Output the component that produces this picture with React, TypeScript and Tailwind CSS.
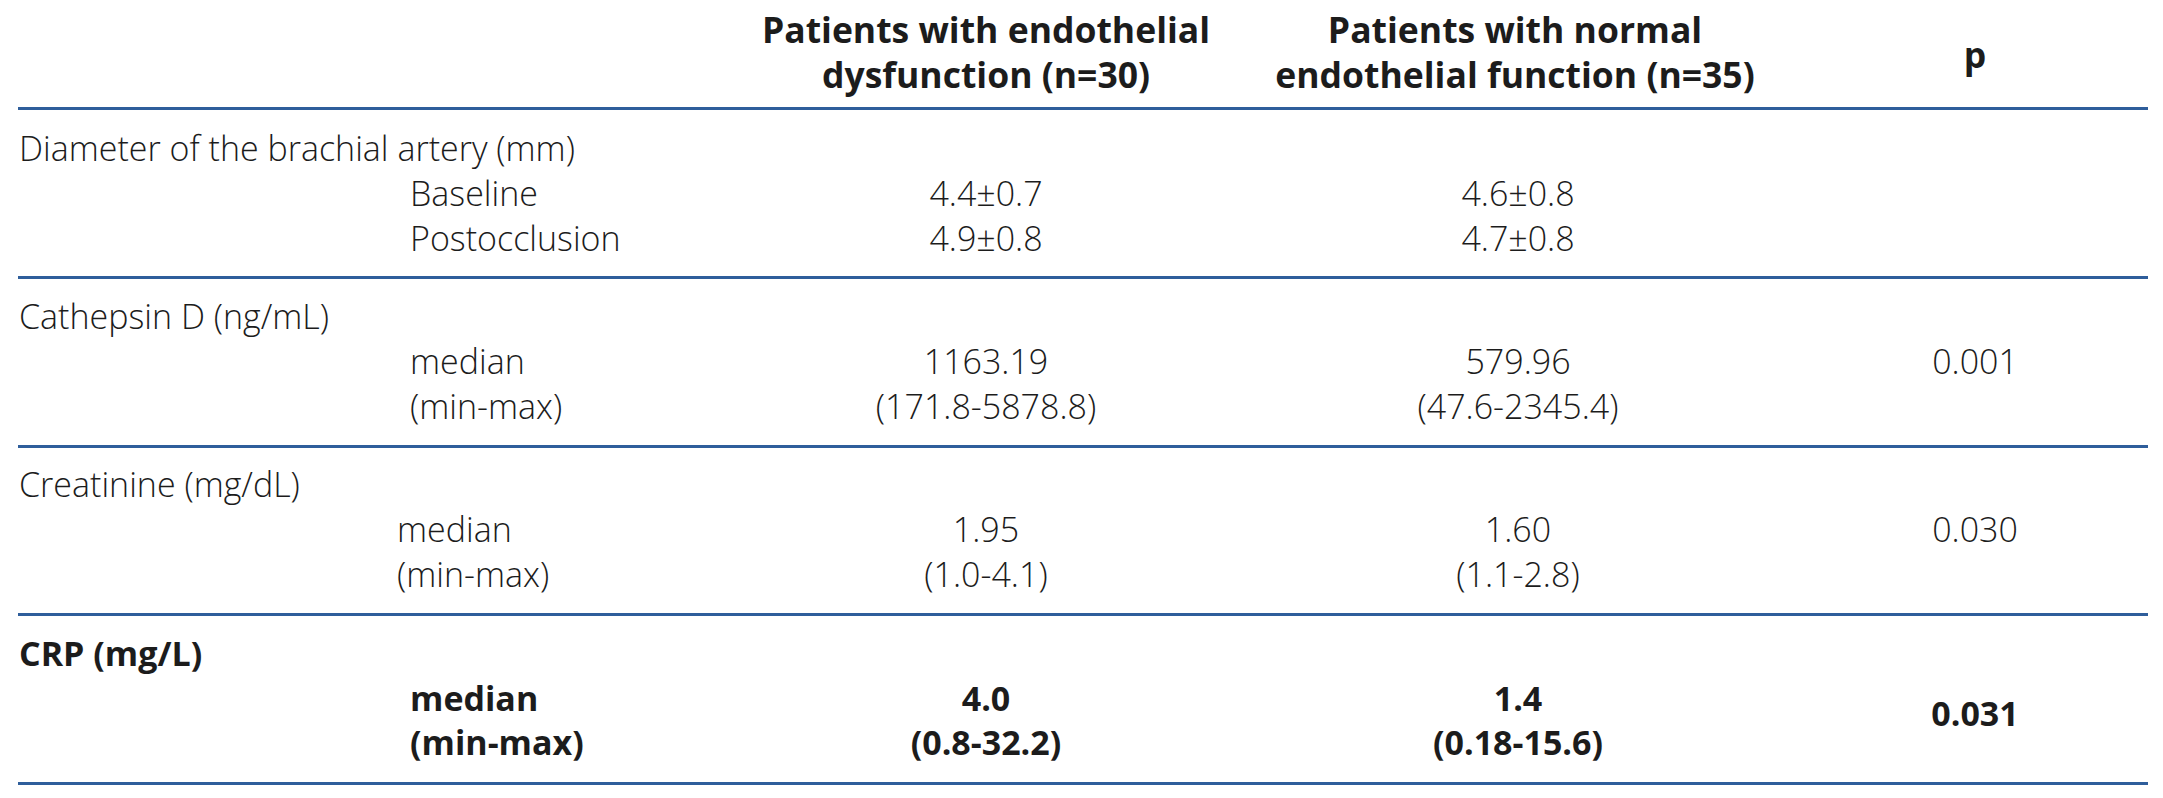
import React from "react";

const COLS = "grid grid-cols-[722px_492px_572px_342px]";

type Row = {
  title: string;
  indent: string;
  labels: string[];
  a: string[];
  b: string[];
  p?: string;
  bold?: boolean;
  pad: string;
};

const ROWS: Row[] = [
  {
    title: "Diameter of the brachial artery (mm)",
    indent: "pl-[392px]",
    labels: ["Baseline", "Postocclusion"],
    a: ["4.4±0.7", "4.9±0.8"],
    b: ["4.6±0.8", "4.7±0.8"],
    pad: "pt-[16px] pb-[15px]",
  },
  {
    title: "Cathepsin D (ng/mL)",
    indent: "pl-[392px]",
    labels: ["median", "(min-max)"],
    a: ["1163.19", "(171.8-5878.8)"],
    b: ["579.96", "(47.6-2345.4)"],
    p: "0.001",
    pad: "pt-[15px] pb-[16px]",
  },
  {
    title: "Creatinine (mg/dL)",
    indent: "pl-[379px]",
    labels: ["median", "(min-max)"],
    a: ["1.95", "(1.0-4.1)"],
    b: ["1.60", "(1.1-2.8)"],
    p: "0.030",
    pad: "pt-[14px] pb-[16px]",
  },
  {
    title: "CRP (mg/L)",
    indent: "pl-[392px]",
    labels: ["median", "(min-max)"],
    a: ["4.0", "(0.8-32.2)"],
    b: ["1.4", "(0.18-15.6)"],
    p: "0.031",
    bold: true,
    pad: "pt-[15px] pb-[18px]",
  },
];

function Lines({ items, lead }: { items: string[]; lead: string }) {
  return (
    <div className={lead}>
      {items.map((t) => (
        <div key={t}>{t}</div>
      ))}
    </div>
  );
}

function DataRow({ row }: { row: Row }) {
  const lead = row.bold ? "leading-[44px]" : "leading-[45px]";
  return (
    <div className={`border-b-[3px] border-[#2f5e9b] ${row.pad} ${row.bold ? "font-bold" : "font-light"}`}>
      <div className="pl-px leading-[45px]">{row.title}</div>
      <div className={COLS}>
        <div className={row.indent}>
          <Lines items={row.labels} lead={lead} />
        </div>
        <div className="text-center">
          <Lines items={row.a} lead={lead} />
        </div>
        <div className="text-center">
          <Lines items={row.b} lead={lead} />
        </div>
        {row.bold ? (
          <div className="flex items-center justify-center pb-[14px]">{row.p}</div>
        ) : (
          <div className="text-center leading-[45px]">{row.p}</div>
        )}
      </div>
    </div>
  );
}

export default function App() {
  return (
    <div className="min-h-screen bg-white text-[#1c1c1c] text-[34px] font-['Open_Sans',sans-serif]">
      <div className="ml-[18px] w-[2130px]">
        <div className={`${COLS} border-b-[3px] border-[#2f5e9b] pt-[7px] pb-[10px] font-bold text-[35.5px] leading-[45px]`}>
          <div />
          <div className="text-center whitespace-nowrap">
            Patients with endothelial
            <br />
            dysfunction (n=30)
          </div>
          <div className="text-center whitespace-nowrap pr-[6px]">
            Patients with normal
            <br />
            endothelial function (n=35)
          </div>
          <div className="flex items-center justify-center pt-[4px]">p</div>
        </div>
        {ROWS.map((r) => (
          <DataRow key={r.title} row={r} />
        ))}
      </div>
    </div>
  );
}
